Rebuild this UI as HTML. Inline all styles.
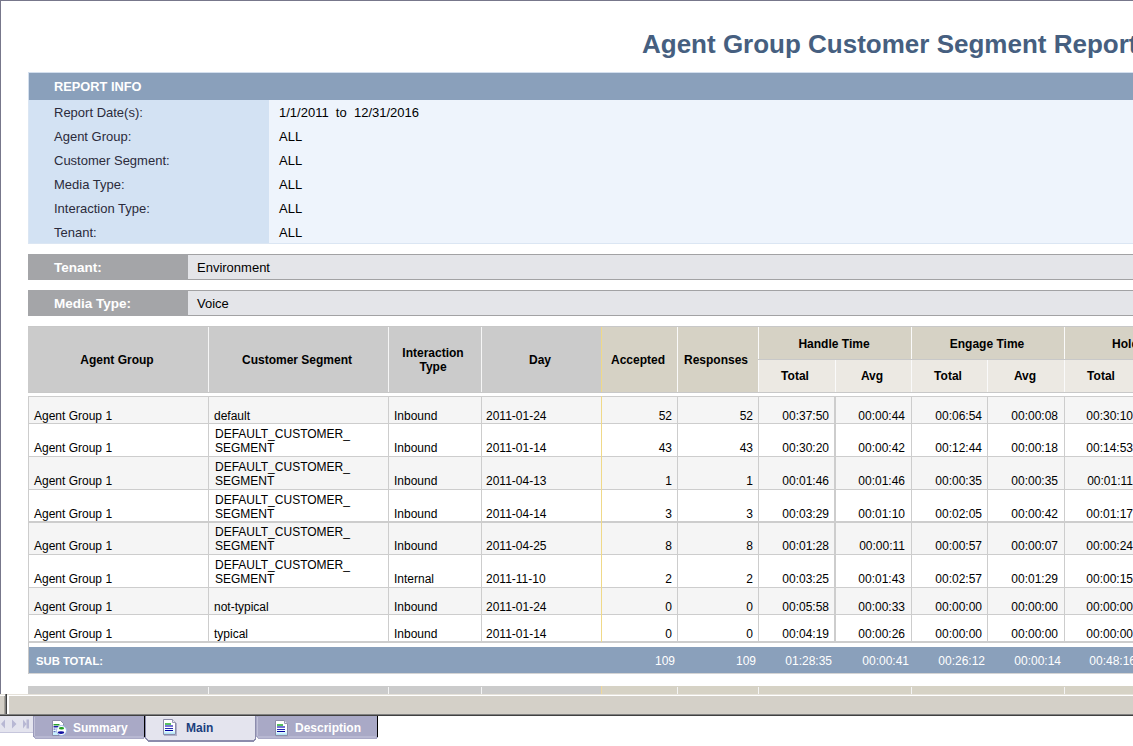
<!DOCTYPE html>
<html><head><meta charset="utf-8"><style>
html,body{margin:0;padding:0;}
body{width:1133px;height:746px;overflow:hidden;position:relative;background:#fff;font-family:"Liberation Sans",sans-serif;}
body>div{position:absolute;}
.t{line-height:20px;white-space:nowrap;color:#000;}
</style></head><body>
<div style="left:0px;top:0px;width:1133px;height:1px;background:#77778b;"></div>
<div style="left:0px;top:0px;width:1px;height:694px;background:#77778b;"></div>
<div class="t" style="top:34px;font-size:26px;font-weight:bold;color:#465f80;left:642px;">Agent Group Customer Segment Report</div>
<div style="left:28px;top:72px;width:1105px;height:28px;background:#d3dfee;"></div>
<div style="left:29px;top:73px;width:1104px;height:27px;background:#8aa0bb;"></div>
<div class="t" style="top:77px;font-size:12.8px;font-weight:bold;color:#fff;left:54px;">REPORT INFO</div>
<div style="left:28px;top:100px;width:1105px;height:144px;background:#dbe6f3;"></div>
<div style="left:29px;top:100px;width:240px;height:143px;background:#d3e2f3;"></div>
<div style="left:269px;top:100px;width:864px;height:143px;background:#eef4fc;"></div>
<div class="t" style="top:103px;font-size:13px;color:#2b2b3b;left:54px;">Report Date(s):</div>
<div class="t" style="top:103px;font-size:13px;left:279px;">1/1/2011&nbsp; to&nbsp; 12/31/2016</div>
<div class="t" style="top:127px;font-size:13px;color:#2b2b3b;left:54px;">Agent Group:</div>
<div class="t" style="top:127px;font-size:13px;left:279px;">ALL</div>
<div class="t" style="top:151px;font-size:13px;color:#2b2b3b;left:54px;">Customer Segment:</div>
<div class="t" style="top:151px;font-size:13px;left:279px;">ALL</div>
<div class="t" style="top:175px;font-size:13px;color:#2b2b3b;left:54px;">Media Type:</div>
<div class="t" style="top:175px;font-size:13px;left:279px;">ALL</div>
<div class="t" style="top:199px;font-size:13px;color:#2b2b3b;left:54px;">Interaction Type:</div>
<div class="t" style="top:199px;font-size:13px;left:279px;">ALL</div>
<div class="t" style="top:223px;font-size:13px;color:#2b2b3b;left:54px;">Tenant:</div>
<div class="t" style="top:223px;font-size:13px;left:279px;">ALL</div>
<div style="left:28px;top:254px;width:160px;height:26px;background:#a4a5a8;"></div>
<div style="left:188px;top:254px;width:945px;height:26px;background:#a2a2a4;"></div>
<div style="left:188px;top:255px;width:945px;height:24px;background:#e4e5e9;"></div>
<div class="t" style="top:258px;font-size:13.5px;font-weight:bold;color:#fff;left:54px;">Tenant:</div>
<div class="t" style="top:258px;font-size:13px;left:197px;">Environment</div>
<div style="left:28px;top:290px;width:160px;height:26px;background:#a4a5a8;"></div>
<div style="left:188px;top:290px;width:945px;height:26px;background:#a2a2a4;"></div>
<div style="left:188px;top:291px;width:945px;height:24px;background:#e4e5e9;"></div>
<div class="t" style="top:294px;font-size:13.5px;font-weight:bold;color:#fff;left:54px;">Media Type:</div>
<div class="t" style="top:294px;font-size:13px;left:197px;">Voice</div>
<div style="left:28px;top:326px;width:573px;height:67px;background:#cbcbcb;"></div>
<div style="left:601px;top:326px;width:532px;height:67px;background:#d6d2c5;"></div>
<div style="left:758px;top:359px;width:375px;height:34px;background:#ece9e3;"></div>
<div style="left:28px;top:326px;width:1105px;height:1px;background:#c8c8c8;"></div>
<div style="left:28px;top:392px;width:1105px;height:1px;background:#c8c8c8;"></div>
<div style="left:758px;top:359px;width:375px;height:1px;background:#c8c8c8;"></div>
<div style="left:208px;top:327px;width:1px;height:65px;background:#f6f6f6;"></div>
<div style="left:388px;top:327px;width:1px;height:65px;background:#f6f6f6;"></div>
<div style="left:481px;top:327px;width:1px;height:65px;background:#f6f6f6;"></div>
<div style="left:601px;top:327px;width:1px;height:65px;background:#f0d988;"></div>
<div style="left:677px;top:327px;width:1px;height:65px;background:#fafafa;"></div>
<div style="left:758px;top:327px;width:1px;height:65px;background:#fafafa;"></div>
<div style="left:911px;top:327px;width:1px;height:65px;background:#fafafa;"></div>
<div style="left:1064px;top:327px;width:1px;height:65px;background:#fafafa;"></div>
<div style="left:835px;top:360px;width:1px;height:32px;background:#fafafa;"></div>
<div style="left:987px;top:360px;width:1px;height:32px;background:#fafafa;"></div>
<div style="left:1140px;top:360px;width:1px;height:32px;background:#fafafa;"></div>
<div style="left:758px;top:359px;width:375px;height:1px;background:#c8c8c8;"></div>
<div class="t" style="top:350px;font-size:12px;font-weight:bold;left:-183px;width:600px;text-align:center;">Agent Group</div>
<div class="t" style="top:350px;font-size:12px;font-weight:bold;left:-3px;width:600px;text-align:center;">Customer Segment</div>
<div class="t" style="top:343px;font-size:12px;font-weight:bold;left:133px;width:600px;text-align:center;">Interaction</div>
<div class="t" style="top:357px;font-size:12px;font-weight:bold;left:133px;width:600px;text-align:center;">Type</div>
<div class="t" style="top:350px;font-size:12px;font-weight:bold;left:240px;width:600px;text-align:center;">Day</div>
<div class="t" style="top:350px;font-size:12px;font-weight:bold;left:338px;width:600px;text-align:center;">Accepted</div>
<div class="t" style="top:350px;font-size:12px;font-weight:bold;left:416px;width:600px;text-align:center;">Responses</div>
<div class="t" style="top:334px;font-size:12px;font-weight:bold;left:534px;width:600px;text-align:center;">Handle Time</div>
<div class="t" style="top:334px;font-size:12px;font-weight:bold;left:687px;width:600px;text-align:center;">Engage Time</div>
<div class="t" style="top:334px;font-size:12px;font-weight:bold;left:841px;width:600px;text-align:center;">Hold Time</div>
<div class="t" style="top:366px;font-size:12px;font-weight:bold;left:495px;width:600px;text-align:center;">Total</div>
<div class="t" style="top:366px;font-size:12px;font-weight:bold;left:572px;width:600px;text-align:center;">Avg</div>
<div class="t" style="top:366px;font-size:12px;font-weight:bold;left:648px;width:600px;text-align:center;">Total</div>
<div class="t" style="top:366px;font-size:12px;font-weight:bold;left:725px;width:600px;text-align:center;">Avg</div>
<div class="t" style="top:366px;font-size:12px;font-weight:bold;left:801px;width:600px;text-align:center;">Total</div>
<div style="left:29px;top:397px;width:1104px;height:26px;background:#f5f5f5;"></div>
<div style="left:29px;top:424px;width:1104px;height:32px;background:#ffffff;"></div>
<div style="left:29px;top:457px;width:1104px;height:32px;background:#f5f5f5;"></div>
<div style="left:29px;top:490px;width:1104px;height:31px;background:#ffffff;"></div>
<div style="left:29px;top:523px;width:1104px;height:31px;background:#f5f5f5;"></div>
<div style="left:29px;top:555px;width:1104px;height:32px;background:#ffffff;"></div>
<div style="left:29px;top:588px;width:1104px;height:26px;background:#f5f5f5;"></div>
<div style="left:29px;top:615px;width:1104px;height:26px;background:#ffffff;"></div>
<div style="left:28px;top:396px;width:1105px;height:1px;background:#cdcdcd;"></div>
<div style="left:28px;top:423px;width:1105px;height:1px;background:#cdcdcd;"></div>
<div style="left:28px;top:456px;width:1105px;height:1px;background:#cdcdcd;"></div>
<div style="left:28px;top:489px;width:1105px;height:1px;background:#cdcdcd;"></div>
<div style="left:28px;top:521px;width:1105px;height:2px;background:#cdcdcd;"></div>
<div style="left:28px;top:554px;width:1105px;height:1px;background:#cdcdcd;"></div>
<div style="left:28px;top:587px;width:1105px;height:1px;background:#cdcdcd;"></div>
<div style="left:28px;top:614px;width:1105px;height:1px;background:#cdcdcd;"></div>
<div style="left:28px;top:641px;width:1105px;height:2px;background:#cdcdcd;"></div>
<div style="left:28px;top:396px;width:1px;height:246px;background:#cdcdcd;"></div>
<div style="left:208px;top:396px;width:1px;height:246px;background:#cdcdcd;"></div>
<div style="left:388px;top:396px;width:1px;height:246px;background:#cdcdcd;"></div>
<div style="left:481px;top:396px;width:1px;height:246px;background:#cdcdcd;"></div>
<div style="left:677px;top:396px;width:1px;height:246px;background:#cdcdcd;"></div>
<div style="left:758px;top:396px;width:1px;height:246px;background:#cdcdcd;"></div>
<div style="left:911px;top:396px;width:1px;height:246px;background:#cdcdcd;"></div>
<div style="left:987px;top:396px;width:1px;height:246px;background:#cdcdcd;"></div>
<div style="left:1064px;top:396px;width:1px;height:246px;background:#cdcdcd;"></div>
<div style="left:601px;top:396px;width:1px;height:246px;background:#f0d988;"></div>
<div style="left:834px;top:396px;width:2px;height:246px;background:#cdcdcd;"></div>
<div class="t" style="top:406px;font-size:12px;left:34px;">Agent Group 1</div>
<div class="t" style="top:406px;font-size:12px;left:214px;">default</div>
<div class="t" style="top:406px;font-size:12px;left:394px;">Inbound</div>
<div class="t" style="top:406px;font-size:12px;left:486px;">2011-01-24</div>
<div class="t" style="top:406px;font-size:12px;left:372px;width:300px;text-align:right;">52</div>
<div class="t" style="top:406px;font-size:12px;left:453px;width:300px;text-align:right;">52</div>
<div class="t" style="top:406px;font-size:12px;left:529px;width:300px;text-align:right;">00:37:50</div>
<div class="t" style="top:406px;font-size:12px;left:605px;width:300px;text-align:right;">00:00:44</div>
<div class="t" style="top:406px;font-size:12px;left:682px;width:300px;text-align:right;">00:06:54</div>
<div class="t" style="top:406px;font-size:12px;left:758px;width:300px;text-align:right;">00:00:08</div>
<div class="t" style="top:406px;font-size:12px;left:833px;width:300px;text-align:right;">00:30:10</div>
<div class="t" style="top:438px;font-size:12px;left:34px;">Agent Group 1</div>
<div class="t" style="top:424px;font-size:12px;left:215px;">DEFAULT_CUSTOMER_</div>
<div class="t" style="top:438px;font-size:12px;left:215px;">SEGMENT</div>
<div class="t" style="top:438px;font-size:12px;left:394px;">Inbound</div>
<div class="t" style="top:438px;font-size:12px;left:486px;">2011-01-14</div>
<div class="t" style="top:438px;font-size:12px;left:372px;width:300px;text-align:right;">43</div>
<div class="t" style="top:438px;font-size:12px;left:453px;width:300px;text-align:right;">43</div>
<div class="t" style="top:438px;font-size:12px;left:529px;width:300px;text-align:right;">00:30:20</div>
<div class="t" style="top:438px;font-size:12px;left:605px;width:300px;text-align:right;">00:00:42</div>
<div class="t" style="top:438px;font-size:12px;left:682px;width:300px;text-align:right;">00:12:44</div>
<div class="t" style="top:438px;font-size:12px;left:758px;width:300px;text-align:right;">00:00:18</div>
<div class="t" style="top:438px;font-size:12px;left:833px;width:300px;text-align:right;">00:14:53</div>
<div class="t" style="top:471px;font-size:12px;left:34px;">Agent Group 1</div>
<div class="t" style="top:457px;font-size:12px;left:215px;">DEFAULT_CUSTOMER_</div>
<div class="t" style="top:471px;font-size:12px;left:215px;">SEGMENT</div>
<div class="t" style="top:471px;font-size:12px;left:394px;">Inbound</div>
<div class="t" style="top:471px;font-size:12px;left:486px;">2011-04-13</div>
<div class="t" style="top:471px;font-size:12px;left:372px;width:300px;text-align:right;">1</div>
<div class="t" style="top:471px;font-size:12px;left:453px;width:300px;text-align:right;">1</div>
<div class="t" style="top:471px;font-size:12px;left:529px;width:300px;text-align:right;">00:01:46</div>
<div class="t" style="top:471px;font-size:12px;left:605px;width:300px;text-align:right;">00:01:46</div>
<div class="t" style="top:471px;font-size:12px;left:682px;width:300px;text-align:right;">00:00:35</div>
<div class="t" style="top:471px;font-size:12px;left:758px;width:300px;text-align:right;">00:00:35</div>
<div class="t" style="top:471px;font-size:12px;left:833px;width:300px;text-align:right;">00:01:11</div>
<div class="t" style="top:504px;font-size:12px;left:34px;">Agent Group 1</div>
<div class="t" style="top:490px;font-size:12px;left:215px;">DEFAULT_CUSTOMER_</div>
<div class="t" style="top:504px;font-size:12px;left:215px;">SEGMENT</div>
<div class="t" style="top:504px;font-size:12px;left:394px;">Inbound</div>
<div class="t" style="top:504px;font-size:12px;left:486px;">2011-04-14</div>
<div class="t" style="top:504px;font-size:12px;left:372px;width:300px;text-align:right;">3</div>
<div class="t" style="top:504px;font-size:12px;left:453px;width:300px;text-align:right;">3</div>
<div class="t" style="top:504px;font-size:12px;left:529px;width:300px;text-align:right;">00:03:29</div>
<div class="t" style="top:504px;font-size:12px;left:605px;width:300px;text-align:right;">00:01:10</div>
<div class="t" style="top:504px;font-size:12px;left:682px;width:300px;text-align:right;">00:02:05</div>
<div class="t" style="top:504px;font-size:12px;left:758px;width:300px;text-align:right;">00:00:42</div>
<div class="t" style="top:504px;font-size:12px;left:833px;width:300px;text-align:right;">00:01:17</div>
<div class="t" style="top:536px;font-size:12px;left:34px;">Agent Group 1</div>
<div class="t" style="top:522px;font-size:12px;left:215px;">DEFAULT_CUSTOMER_</div>
<div class="t" style="top:536px;font-size:12px;left:215px;">SEGMENT</div>
<div class="t" style="top:536px;font-size:12px;left:394px;">Inbound</div>
<div class="t" style="top:536px;font-size:12px;left:486px;">2011-04-25</div>
<div class="t" style="top:536px;font-size:12px;left:372px;width:300px;text-align:right;">8</div>
<div class="t" style="top:536px;font-size:12px;left:453px;width:300px;text-align:right;">8</div>
<div class="t" style="top:536px;font-size:12px;left:529px;width:300px;text-align:right;">00:01:28</div>
<div class="t" style="top:536px;font-size:12px;left:605px;width:300px;text-align:right;">00:00:11</div>
<div class="t" style="top:536px;font-size:12px;left:682px;width:300px;text-align:right;">00:00:57</div>
<div class="t" style="top:536px;font-size:12px;left:758px;width:300px;text-align:right;">00:00:07</div>
<div class="t" style="top:536px;font-size:12px;left:833px;width:300px;text-align:right;">00:00:24</div>
<div class="t" style="top:569px;font-size:12px;left:34px;">Agent Group 1</div>
<div class="t" style="top:555px;font-size:12px;left:215px;">DEFAULT_CUSTOMER_</div>
<div class="t" style="top:569px;font-size:12px;left:215px;">SEGMENT</div>
<div class="t" style="top:569px;font-size:12px;left:394px;">Internal</div>
<div class="t" style="top:569px;font-size:12px;left:486px;">2011-11-10</div>
<div class="t" style="top:569px;font-size:12px;left:372px;width:300px;text-align:right;">2</div>
<div class="t" style="top:569px;font-size:12px;left:453px;width:300px;text-align:right;">2</div>
<div class="t" style="top:569px;font-size:12px;left:529px;width:300px;text-align:right;">00:03:25</div>
<div class="t" style="top:569px;font-size:12px;left:605px;width:300px;text-align:right;">00:01:43</div>
<div class="t" style="top:569px;font-size:12px;left:682px;width:300px;text-align:right;">00:02:57</div>
<div class="t" style="top:569px;font-size:12px;left:758px;width:300px;text-align:right;">00:01:29</div>
<div class="t" style="top:569px;font-size:12px;left:833px;width:300px;text-align:right;">00:00:15</div>
<div class="t" style="top:597px;font-size:12px;left:34px;">Agent Group 1</div>
<div class="t" style="top:597px;font-size:12px;left:214px;">not-typical</div>
<div class="t" style="top:597px;font-size:12px;left:394px;">Inbound</div>
<div class="t" style="top:597px;font-size:12px;left:486px;">2011-01-24</div>
<div class="t" style="top:597px;font-size:12px;left:372px;width:300px;text-align:right;">0</div>
<div class="t" style="top:597px;font-size:12px;left:453px;width:300px;text-align:right;">0</div>
<div class="t" style="top:597px;font-size:12px;left:529px;width:300px;text-align:right;">00:05:58</div>
<div class="t" style="top:597px;font-size:12px;left:605px;width:300px;text-align:right;">00:00:33</div>
<div class="t" style="top:597px;font-size:12px;left:682px;width:300px;text-align:right;">00:00:00</div>
<div class="t" style="top:597px;font-size:12px;left:758px;width:300px;text-align:right;">00:00:00</div>
<div class="t" style="top:597px;font-size:12px;left:833px;width:300px;text-align:right;">00:00:00</div>
<div class="t" style="top:624px;font-size:12px;left:34px;">Agent Group 1</div>
<div class="t" style="top:624px;font-size:12px;left:214px;">typical</div>
<div class="t" style="top:624px;font-size:12px;left:394px;">Inbound</div>
<div class="t" style="top:624px;font-size:12px;left:486px;">2011-01-14</div>
<div class="t" style="top:624px;font-size:12px;left:372px;width:300px;text-align:right;">0</div>
<div class="t" style="top:624px;font-size:12px;left:453px;width:300px;text-align:right;">0</div>
<div class="t" style="top:624px;font-size:12px;left:529px;width:300px;text-align:right;">00:04:19</div>
<div class="t" style="top:624px;font-size:12px;left:605px;width:300px;text-align:right;">00:00:26</div>
<div class="t" style="top:624px;font-size:12px;left:682px;width:300px;text-align:right;">00:00:00</div>
<div class="t" style="top:624px;font-size:12px;left:758px;width:300px;text-align:right;">00:00:00</div>
<div class="t" style="top:624px;font-size:12px;left:833px;width:300px;text-align:right;">00:00:00</div>
<div style="left:28px;top:642px;width:1px;height:32px;background:#c8c8c8;"></div>
<div style="left:29px;top:673px;width:1104px;height:1px;background:#d4d4d4;"></div>
<div style="left:29px;top:647px;width:1104px;height:26px;background:#8aa0bb;"></div>
<div class="t" style="top:651px;font-size:11.25px;font-weight:bold;color:#fff;left:36px;">SUB TOTAL:</div>
<div class="t" style="top:651px;font-size:12px;color:#ffffff;left:375px;width:300px;text-align:right;">109</div>
<div class="t" style="top:651px;font-size:12px;color:#ffffff;left:456px;width:300px;text-align:right;">109</div>
<div class="t" style="top:651px;font-size:12px;color:#ffffff;left:532px;width:300px;text-align:right;">01:28:35</div>
<div class="t" style="top:651px;font-size:12px;color:#ffffff;left:609px;width:300px;text-align:right;">00:00:41</div>
<div class="t" style="top:651px;font-size:12px;color:#ffffff;left:685px;width:300px;text-align:right;">00:26:12</div>
<div class="t" style="top:651px;font-size:12px;color:#ffffff;left:761px;width:300px;text-align:right;">00:00:14</div>
<div class="t" style="top:651px;font-size:12px;color:#ffffff;left:836px;width:300px;text-align:right;">00:48:16</div>
<div style="left:28px;top:686px;width:573px;height:8px;background:#cbcbcb;"></div>
<div style="left:601px;top:686px;width:532px;height:8px;background:#d6d2c5;"></div>
<div style="left:208px;top:687px;width:1px;height:7px;background:#f4f4f4;"></div>
<div style="left:388px;top:687px;width:1px;height:7px;background:#f4f4f4;"></div>
<div style="left:481px;top:687px;width:1px;height:7px;background:#f4f4f4;"></div>
<div style="left:677px;top:687px;width:1px;height:7px;background:#f4f4f4;"></div>
<div style="left:758px;top:687px;width:1px;height:7px;background:#f4f4f4;"></div>
<div style="left:911px;top:687px;width:1px;height:7px;background:#f4f4f4;"></div>
<div style="left:1064px;top:687px;width:1px;height:7px;background:#f4f4f4;"></div>
<div style="left:601px;top:686px;width:1px;height:8px;background:#efd89a;"></div>
<div style="left:0px;top:694px;width:1133px;height:22px;background:#d4d0c8;"></div>
<div style="left:0px;top:694px;width:1133px;height:1px;background:#e6e2da;"></div>
<div style="left:0px;top:695px;width:5px;height:1px;background:#ffffff;"></div>
<div style="left:9px;top:695px;width:1124px;height:1px;background:#ffffff;"></div>
<div style="left:4px;top:696px;width:1px;height:18px;background:#a8a49c;"></div>
<div style="left:5px;top:694px;width:1px;height:21px;background:#808080;"></div>
<div style="left:6px;top:694px;width:1px;height:21px;background:#404040;"></div>
<div style="left:7px;top:695px;width:2px;height:19px;background:#ffffff;"></div>
<div style="left:0px;top:714px;width:1133px;height:1px;background:#808080;"></div>
<div style="left:0px;top:715px;width:1133px;height:1px;background:#404040;"></div>
<svg style="position:absolute;left:0;top:716px" width="400" height="30" shape-rendering="crispEdges">
<rect x="0" y="0" width="33" height="16" fill="#e4e4ee"/>
<rect x="0" y="16" width="33" height="1" fill="#c6c6dc"/>
<g fill="#b8b8d4" shape-rendering="auto"><path d="M1 8 L5 3.5 V12.5 Z"/><path d="M12 3.5 L16.5 8 L12 12.5 Z"/><path d="M23 3.5 L26.5 8 V3.5 H29 V12.5 H26.5 V8 L23 12.5 Z"/></g>
<path d="M33 0 H145 V21 L143 23 H35 L33 21 Z" fill="#a9a9c6"/>
<rect x="33" y="0" width="1" height="21" fill="#9a9aba"/>
<rect x="34" y="1" width="1" height="19" fill="#c0c0d8"/>
<rect x="35" y="20" width="108" height="2" fill="#b8b8d2"/>
<rect x="144" y="0" width="1" height="21" fill="#000"/>
<path d="M145 0 H256 V23 L253 26 H148 L145 23 Z" fill="#8c8cac"/>
<path d="M146 0 H255 V22 L253 24 H148 L146 22 Z" fill="#e4e4ee"/>
<rect x="146" y="0" width="109" height="1" fill="#eeeef6"/>
<path d="M256 0 H378 V21 L376 23 H258 L256 21 Z" fill="#a9a9c6"/>
<rect x="257" y="1" width="1" height="19" fill="#c0c0d8"/>
<rect x="258" y="20" width="118" height="2" fill="#b8b8d2"/>
<rect x="377" y="0" width="1" height="21" fill="#000"/>
</svg>
<div class="t" style="top:718px;font-size:12px;font-weight:bold;color:#ffffff;left:73px;">Summary</div>
<div class="t" style="top:718px;font-size:12px;font-weight:bold;color:#1b3f7d;left:186px;">Main</div>
<div class="t" style="top:718px;font-size:12px;font-weight:bold;color:#ffffff;left:295px;">Description</div>
<svg style="position:absolute;left:163px;top:719px" width="15" height="18"><defs><linearGradient id="g163" x1="0" y1="0" x2="0" y2="1"><stop offset="0.55" stop-color="#ffffff"/><stop offset="0.8" stop-color="#dff8ff"/><stop offset="1" stop-color="#9ed8f0"/></linearGradient></defs><path d="M0.5 0.5 H9.5 L12.5 3.5 V15.5 H0.5 Z" fill="url(#g163)" stroke="#8c8ca8"/><path d="M9.5 0.5 V3.5 H12.5" fill="#e6e6f0" stroke="#9a9ab4"/><rect x="13" y="4" width="1" height="12" fill="#b0b0c8"/><rect x="1" y="16" width="13" height="1" fill="#b0b0c8"/><g shape-rendering="crispEdges"><rect x="2" y="4" width="6" height="2" fill="#58c060"/><rect x="2" y="6" width="8" height="2" fill="#7474d4"/><rect x="2" y="9" width="8" height="1" fill="#2828b0"/><rect x="2" y="11" width="8" height="1" fill="#0000a0"/></g></svg>
<svg style="position:absolute;left:275px;top:720px" width="15" height="18"><defs><linearGradient id="g275" x1="0" y1="0" x2="0" y2="1"><stop offset="0.55" stop-color="#ffffff"/><stop offset="0.8" stop-color="#dff8ff"/><stop offset="1" stop-color="#9ed8f0"/></linearGradient></defs><path d="M0.5 0.5 H9.5 L12.5 3.5 V15.5 H0.5 Z" fill="url(#g275)" stroke="#8c8ca8"/><path d="M9.5 0.5 V3.5 H12.5" fill="#e6e6f0" stroke="#9a9ab4"/><rect x="13" y="4" width="1" height="12" fill="#b0b0c8"/><rect x="1" y="16" width="13" height="1" fill="#b0b0c8"/><g shape-rendering="crispEdges"><rect x="2" y="4" width="6" height="2" fill="#58c060"/><rect x="2" y="6" width="8" height="2" fill="#7474d4"/><rect x="2" y="9" width="8" height="1" fill="#2828b0"/><rect x="2" y="11" width="8" height="1" fill="#0000a0"/></g></svg>
<svg style="position:absolute;left:51px;top:719px" width="18" height="18"><defs><linearGradient id="gs" x1="0" y1="0" x2="0" y2="1"><stop offset="0.5" stop-color="#ffffff"/><stop offset="1" stop-color="#b8ecff"/></linearGradient></defs><path d="M1.5 1.5 H9.5 L12.5 4.5 V16.5 H1.5 Z" fill="url(#gs)" stroke="#8c8ca8"/><rect x="2.5" y="5" width="6" height="1.5" fill="#28a030"/><rect x="2.5" y="7" width="5" height="1.5" fill="#2020a8"/><rect x="2.5" y="9.5" width="2" height="1.2" fill="#6070c0"/><rect x="2.5" y="12" width="2" height="1.2" fill="#6070c0"/><circle cx="10.5" cy="11.5" r="5" fill="#ffffff" stroke="#9cb8e4"/><ellipse cx="10.5" cy="9.3" rx="2.6" ry="1.3" fill="#20a020"/><ellipse cx="10" cy="13.6" rx="3.2" ry="1.4" fill="#1010a0"/></svg>
</body></html>
